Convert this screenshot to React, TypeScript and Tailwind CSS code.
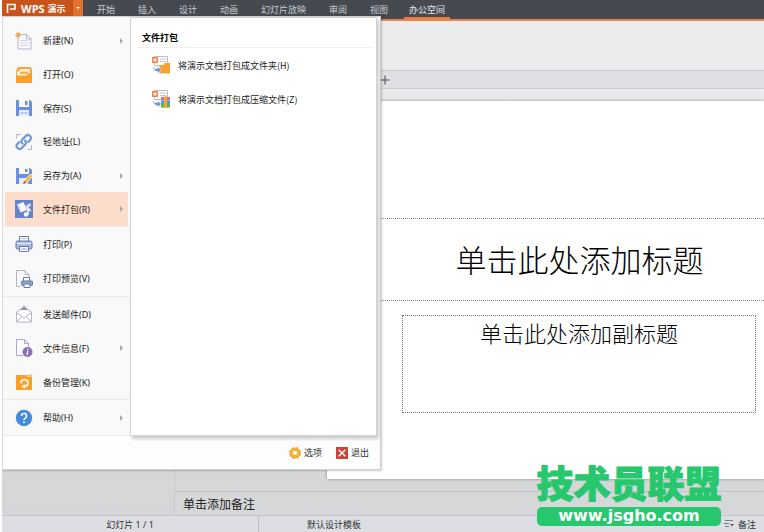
import type { ReactNode } from "react";

type MenuEntry = { label: string; icon: ReactNode; submenu?: boolean; active?: boolean };

function Icon({ children, size = "size-[18px]" }: { children: ReactNode; size?: string }) {
  return (
    <svg viewBox="0 0 18 18" className={`${size} shrink-0`} fill="none" aria-hidden="true">
      {children}
    </svg>
  );
}

const NewIcon = (
  <Icon>
    <path d="M3 2.500h8.500l4.500 4v10.500H3z" fill="#fcfcfe" stroke="#b4b3c6" />
    <path d="M11.500 2.500v4.500h4.500" stroke="#b4b3c6" />
    <path d="M5 8.500h8M5 11h9M5 13.500h9" stroke="#d2d1de" />
    <path d="M3 0v6M0 3h6M1 1l4 4M5 1L1 5" stroke="#f79a3e" />
  </Icon>
);
const OpenIcon = (
  <Icon>
    <path d="M3 1h13l1 3v6H1V5z" fill="#f9a83c" />
    <path d="M5 3h10v6H5z" fill="#fdeccb" />
    <path d="M2 5.500h2.500V4H14v6H2z" fill="#fff8ea" />
    <path d="M5 5.500h8v2.500H5z" fill="#f9b04c" />
    <path d="M1 9.500h10.500l1.500-2h4V17H1z" fill="#fb9f28" />
  </Icon>
);
const SaveIcon = (
  <Icon>
    <path d="M1 1h14l2 2v14H1z" fill="#6b8fdf" />
    <path d="M4 1h10v7H4z" fill="#fafbff" />
    <path d="M10 2h2.500v4H10z" fill="#6b8fdf" />
    <path d="M4 11h10v6H4z" fill="#e6ecfa" />
    <path d="M5 14h8" stroke="#b3c4ea" strokeWidth="1.500" />
  </Icon>
);
const LinkIcon = (
  <Icon>
    <path d="M1.500 5.500v-4h4M16.500 12v4.500h-4" stroke="#b4b3c6" />
    <g stroke="#6f9ad6" strokeWidth="2.200" strokeLinecap="round">
      <path d="M7.500 10.500a3 3 0 0 1 0-4.200l3.600-3.600a3 3 0 0 1 4.200 4.200l-2 2" />
      <path d="M10 7.500a3 3 0 0 1 0 4.200l-3.600 3.600a3 3 0 0 1-4.200-4.200l2-2" />
    </g>
  </Icon>
);
const SaveAsIcon = (
  <Icon>
    <path d="M1 1h14l2 2v14H1z" fill="#6b8fdf" />
    <path d="M4 1h10v6H4z" fill="#fafbff" />
    <path d="M10 2h2.500v3H10z" fill="#6b8fdf" />
    <path d="M4 11h9v6H4z" fill="#e6ecfa" />
    <path d="M8 17l1.500-4 6.500-6 2 2-6 7z" fill="#f6b73c" stroke="#fff" strokeWidth=".7" />
    <path d="M8 17l1.200-3 2 2z" fill="#7a5b3a" />
  </Icon>
);
const PackIcon = (
  <Icon>
    <path d="M0 0h18v18H0z" fill="#6484c9" />
    <path d="M2 4.500l6.500-2.500 3.500 8-6.500 2.500z" fill="#fff" />
    <path d="M3.500 5l3 7" stroke="#9fb4e2" strokeDasharray="1 1" />
    <path d="M10.500 6l4.500-3 1 2-4 4z" fill="#dce6fb" />
    <path d="M13 7.500v7M13 8l2.500 3" stroke="#fff" strokeWidth="1.500" />
    <circle cx="11" cy="14.500" r="2.200" fill="#fff" />
  </Icon>
);
const PrintIcon = (
  <Icon>
    <path d="M4.500 6V1.500h9V6" fill="#fff" stroke="#6479ad" />
    <path d="M6 3.500h6" stroke="#b9c2dc" />
    <rect x="1" y="6" width="16" height="8" rx="1.500" fill="#a9b9e0" stroke="#6479ad" />
    <path d="M2 8.500h14" stroke="#eef2fb" />
    <path d="M4.500 11.500h9v5h-9z" fill="#fff" stroke="#6479ad" />
    <path d="M6 14h6" stroke="#8fa3d2" />
  </Icon>
);
const PreviewIcon = (
  <Icon>
    <path d="M1.500 .500H10l4 4v4M1.500 .500v16h4" stroke="#b4b3c6" />
    <path d="M10 .500v4h4" stroke="#b4b3c6" />
    <path d="M8.500 11V7.500h6V11" fill="#fff" stroke="#6479ad" />
    <rect x="6.500" y="11" width="11" height="4.500" rx="1" fill="#8fa3d2" stroke="#6479ad" />
    <path d="M9 14h6v3.500H9z" fill="#fff" stroke="#6479ad" />
  </Icon>
);
const MailIcon = (
  <Icon>
    <path d="M1.500 7L9 2.500 16.500 7v10h-15z" fill="#fff" stroke="#b4b3c0" />
    <path d="M1.500 7.500L9 13l7.500-5.500M1.500 17l5-5.500M16.500 17l-5-5.500" stroke="#b4b3c0" />
    <path d="M9 .500l4 4.500H5z" fill="#9a96ad" />
  </Icon>
);
const InfoIcon = (
  <Icon>
    <path d="M8 16.500H1.500V.500H9.500l4 4V9" fill="#fdfdff" stroke="#b1a6c9" />
    <path d="M9.500 .500v4h4" stroke="#b1a6c9" />
    <circle cx="12.500" cy="13" r="5" fill="#8a71b5" />
    <path d="M13 9.800v1.400M12.800 12l-.800 4" stroke="#fff" strokeWidth="1.300" />
  </Icon>
);
const BackupIcon = (
  <Icon>
    <path d="M1 2h10l1 1.500h5V17H1z" fill="#fb9f28" />
    <path d="M12 1.500h5V3h-5z" fill="#f9c27a" />
    <path d="M6 10.500A3.500 3.500 0 1 1 9.500 13.500" stroke="#fff" strokeWidth="1.700" />
    <path d="M9.800 11v5L6.500 13.500z" fill="#fff" />
  </Icon>
);
const HelpIcon = (
  <Icon>
    <circle cx="9" cy="9" r="8.200" fill="#458ade" />
    <path d="M6.500 7a2.500 2.500 0 1 1 3.700 2.100C9.300 9.700 9 10 9 11" stroke="#fff" strokeWidth="1.600" />
    <circle cx="9" cy="13.300" r="1" fill="#fff" />
  </Icon>
);

function PackageIcon({ archive = false }: { archive?: boolean }) {
  return (
    <Icon>
      <path d="M2.500 .500h13v9h-13z" fill="#fff" stroke="#b9bac6" />
      <path d="M8 3h6M8 5.500h6" stroke="#c3c4cf" />
      <path d="M0 1h6v6H0z" fill="#f0864e" />
      <path d="M2 3h2v2H2z" stroke="#fff" />
      {archive ? (
        <>
          <path d="M9 7h9v3.500H9z" fill="#cf6fa0" />
          <path d="M9 10.500h9V14H9z" fill="#459fd8" />
          <path d="M9 14h9v3.500H9z" fill="#67ad48" />
          <path d="M12 6.500h3v11h-3z" fill="#f4a52b" />
        </>
      ) : (
        <path d="M7.500 9h4l1-2H18v10.500H7.500z" fill="#fba033" />
      )}
      <path d="M2 8v4.500h3.500v-2l4 3.500-4 3.500v-2H4L1 12.500z" fill="#7194d4" stroke="#fff" strokeWidth=".5" />
    </Icon>
  );
}

const groups: { height: string; items: MenuEntry[] }[] = [
  {
    height: "h-[203px]",
    items: [
      { label: "新建(N)", icon: NewIcon, submenu: true },
      { label: "打开(O)", icon: OpenIcon },
      { label: "保存(S)", icon: SaveIcon },
      { label: "轻地址(L)", icon: LinkIcon },
      { label: "另存为(A)", icon: SaveAsIcon, submenu: true },
      { label: "文件打包(R)", icon: PackIcon, submenu: true, active: true },
    ],
  },
  {
    height: "h-[70px]",
    items: [
      { label: "打印(P)", icon: PrintIcon },
      { label: "打印预览(V)", icon: PreviewIcon },
    ],
  },
  {
    height: "h-[103px]",
    items: [
      { label: "发送邮件(D)", icon: MailIcon },
      { label: "文件信息(F)", icon: InfoIcon, submenu: true },
      { label: "备份管理(K)", icon: BackupIcon },
    ],
  },
  { height: "h-[36px]", items: [{ label: "帮助(H)", icon: HelpIcon, submenu: true }] },
];

const tabs = ["开始", "插入", "设计", "动画", "幻灯片放映", "审阅", "视图"];

function Header() {
  return (
    <header className="flex h-[21px] border-b-2 border-[#ec8045] bg-[#454950] text-[9px] leading-none text-[#c9cbd0]">
      <button className="flex h-4 items-center bg-[#c9541b] pl-1 text-white">
        <svg viewBox="0 0 10 10" className="size-2.5" fill="none" stroke="#fff" strokeWidth="1.6" aria-hidden="true">
          <path d="M1.500 10V1.500H9v4.500H4" />
        </svg>
        <span className="ml-[5px] flex w-[52px] items-center gap-[3px] font-bold">
          <span className="font-['Open_Sans',sans-serif] text-[11px]">WPS</span>
          <span>演示</span>
        </span>
      </button>
      <button aria-label="更多" className="flex h-4 w-[10px] items-center justify-center bg-[#e0712f]">
        <span className="border-x-2 border-t-2 border-x-transparent border-t-white" />
      </button>
      <nav className="flex h-[19px] pl-3.5">
        <div className="flex gap-[23px]">
          {tabs.map((t) => (
            <button key={t} className="whitespace-nowrap">{t}</button>
          ))}
        </div>
        <button className="ml-4 border-b-2 border-[#ec7a3a] px-[5px] pt-0.5 whitespace-nowrap text-[#e6e7ea]">办公空间</button>
      </nav>
    </header>
  );
}

function FileMenu() {
  return (
    <div className="absolute top-4 left-0 w-[379px] border border-[#cfcfd1] border-l-[#d8d8da] bg-[#fdfdfd] text-[9px] leading-none text-[#222] shadow-[1px_1px_2px_rgba(0,0,0,0.2)]">
      <div className="flex">
        <div className="w-[127px] shrink-0 border-b border-[#ececee] bg-[#f9f9fa] pt-1.5 font-['Noto_Sans','Noto_Sans_CJK_SC',sans-serif]">
          {groups.map((g, i) => (
            <div key={i} className={`${g.height} flex flex-col border-t px-0.5 ${i ? "border-[#ebebed]" : "border-transparent"}`}>
              {g.items.map((m) => (
                <button key={m.label} className={`flex w-full flex-1 items-center pr-[5px] pl-2.5 ${m.active ? "bg-[#fcdccb]" : ""}`}>
                  {m.icon}
                  <span className="ml-2.5 flex-1 text-left">{m.label}</span>
                  {m.submenu && <span className="border-y-3 border-l-3 border-y-transparent border-l-[#a9a9ad]" />}
                </button>
              ))}
            </div>
          ))}
        </div>
        <section className="mr-[3px] flex-1 border border-[#d2d2d4] bg-white pr-1 pl-1.5 shadow-[2px_3px_3px_rgba(0,0,0,0.2)]">
          <h2 className="flex h-[30px] items-center border-b border-[#f0f0f2] pt-3 pb-0.5 pl-[5px] font-bold text-black">文件打包</h2>
          <div className="flex flex-col gap-4 pt-2 pl-[15px]">
            <button className="flex items-center gap-2">
              <PackageIcon />
              将演示文档打包成文件夹(H)
            </button>
            <button className="flex items-center gap-2">
              <PackageIcon archive />
              将演示文档打包成压缩文件(Z)
            </button>
          </div>
        </section>
      </div>
      <div className="flex h-[33px] items-center justify-end gap-3.5 pr-[11px] text-[#333]">
        <button className="flex items-center gap-[3px]">
          <Icon size="size-3">
            <circle cx="9" cy="9" r="5.500" stroke="#eda62a" strokeWidth="5" />
            <circle cx="9" cy="9" r="7.700" stroke="#eda62a" strokeWidth="2.600" strokeDasharray="3.600 2.450" />
            <circle cx="9" cy="9" r="5.200" stroke="#f7cd5c" strokeWidth="1.500" />
          </Icon>
          选项
        </button>
        <button className="flex items-center gap-[3px]">
          <Icon size="size-3">
            <path d="M0 0h18v18H0z" fill="#c8453c" />
            <path d="M4 4l10 10M14 4L4 14" stroke="#fff" strokeWidth="2" />
          </Icon>
          退出
        </button>
      </div>
    </div>
  );
}

export default function App() {
  return (
    <div className="min-h-screen bg-white pl-0.5 font-['Noto_Sans_CJK_SC',sans-serif]">
      <div className="relative flex min-h-screen flex-col overflow-hidden">
        <Header />
        <div className="h-[49px] bg-[#ebecee]" />
        <div className="flex h-[19px] items-center border-y border-[#c9cbd0] bg-[#dfe0e4] pl-[378px]">
          <button aria-label="新建标签" className="flex size-2.5 items-center justify-center">
            <svg viewBox="0 0 10 10" className="size-2.5" stroke="#6c7586" strokeWidth="1.500" aria-hidden="true">
              <path d="M5 .500v9M.500 5h9" />
            </svg>
          </button>
        </div>
        <div className="flex flex-1 bg-linear-to-b from-[#ebecee] from-0% via-[#dcdddf] via-10% to-[#d5d6d8]">
          <aside className="w-[173px] shrink-0 border-r border-[#c9cacd]" />
          <div className="flex flex-1 flex-col">
            <main className="flex flex-1 flex-col pt-3 pb-3 pl-[152px]">
              <div className="flex-1 bg-white shadow-[0_0_3px_rgba(0,0,0,0.35)]">
                <div className="mt-[117px] flex h-[83px] items-center justify-center border-y border-dotted border-[#888] pl-[68px] text-[31px] font-light whitespace-nowrap text-black">
                  单击此处添加标题
                </div>
                <div className="mt-3.5 mr-2 ml-[75px] h-[98px] border border-dotted border-[#777] text-center text-[22px] leading-8 font-light whitespace-nowrap text-black">
                  单击此处添加副标题
                </div>
              </div>
            </main>
            <input
              aria-label="备注"
              defaultValue="单击添加备注"
              className="h-6 border-t border-[#c0c2cc] bg-[#d6d7d9] pl-2 text-[12px] text-[#222] outline-none"
            />
          </div>
        </div>
        <footer className="flex h-[17px] items-center border-t border-[#c4c6cb] bg-[#dcdee3] font-['Noto_Sans','Noto_Sans_CJK_SC',sans-serif] text-[9px] leading-none text-[#333]">
          <span className="w-[257px] border-r border-[#bfc1c6] py-1 text-center whitespace-pre">幻灯片 1 / 1</span>
          <span className="ml-12">默认设计模板</span>
          <button className="mr-2 ml-auto flex items-center gap-1">
            <svg viewBox="0 0 10 8" className="h-2 w-2.5" fill="none" stroke="#777c88" aria-hidden="true">
              <path d="M1 .500h8M0 3.500h5M1 6.500h4" />
              <path d="M6 4h4L8 6.500z" fill="#555b68" stroke="none" />
            </svg>
            备注
          </button>
        </footer>
        <FileMenu />
        <div className="absolute right-[43px] bottom-1.5 flex w-[184px] flex-col items-center gap-1.5">
          <div className="text-[37px] leading-[38px] font-black whitespace-nowrap text-[#27c76e] [-webkit-text-stroke:1px_#27c76e]">技术员联盟</div>
          <div className="h-[19px] w-full rounded-[5px] bg-[#27c76e] text-center font-['DejaVu_Sans',sans-serif] text-[16px] leading-[18px] font-bold text-white">
            www.jsgho.com
          </div>
        </div>
      </div>
    </div>
  );
}
